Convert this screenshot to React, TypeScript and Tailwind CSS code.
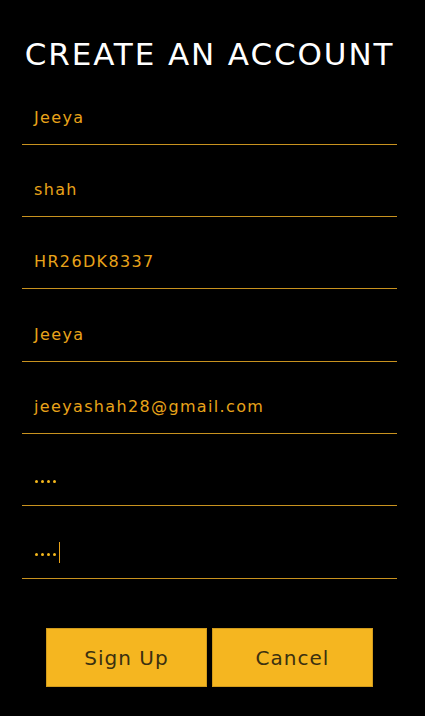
import React from 'react'

const fields = [
  { value: 'Jeeya', type: 'text', h: 'h-[72px]' },
  { value: 'shah', type: 'text', h: 'h-[72px]' },
  { value: 'HR26DK8337', type: 'text', h: 'h-[72px]' },
  { value: 'Jeeya', type: 'text', h: 'h-[73px]' },
  { value: 'jeeyashah28@gmail.com', type: 'email', h: 'h-[72px]' },
  { value: '....', type: 'password', h: 'h-[72px]' },
  { value: '....', type: 'password', h: 'h-[73px]', caret: true },
]

export default function App() {
  return (
    <div className="min-h-[716px] w-full bg-black font-['DejaVu_Sans',sans-serif]">
      <div className="pl-[22px] pr-[28px] pt-[37px]">
        <h1 className="text-center text-[31px] leading-[34px] font-medium tracking-[1.9px] text-white">
          CREATE AN ACCOUNT
        </h1>

        <form className="mt-[2px] flex flex-col">
          {fields.map((f, i) => (
            <div key={i} className={`flex ${f.h} items-end border-b border-[#c8921f] pb-[16px] pl-[12px]`}>
              {f.type === 'password' ? (
                <span className="flex h-[20px] items-end">
                  <span className="mb-[6px] flex gap-[3px] pl-[1px]">
                    {[0, 1, 2, 3].map((d) => (
                      <span key={d} className="block h-[3px] w-[3px] rounded-full bg-[#f5b81c]" />
                    ))}
                  </span>
                  {f.caret && <span className="mb-[-1px] ml-[3px] block h-[21px] w-px bg-[#e8a31a]" />}
                </span>
              ) : (
                <span className="block h-[20px] text-[16px] leading-[20px] tracking-[1.35px] text-[#e8a31a]">
                  {f.value}
                </span>
              )}
            </div>
          ))}
        </form>

        <div className="mt-[49px] flex justify-center gap-[5px]">
          <button className="h-[59px] w-[161px] border border-[#d19b1c] bg-[#f5b620] text-[20px] tracking-[1px] text-[#3b3010]">
            Sign Up
          </button>
          <button className="h-[59px] w-[161px] border border-[#d19b1c] bg-[#f5b620] text-[20px] tracking-[1px] text-[#3b3010]">
            Cancel
          </button>
        </div>
      </div>
    </div>
  )
}
